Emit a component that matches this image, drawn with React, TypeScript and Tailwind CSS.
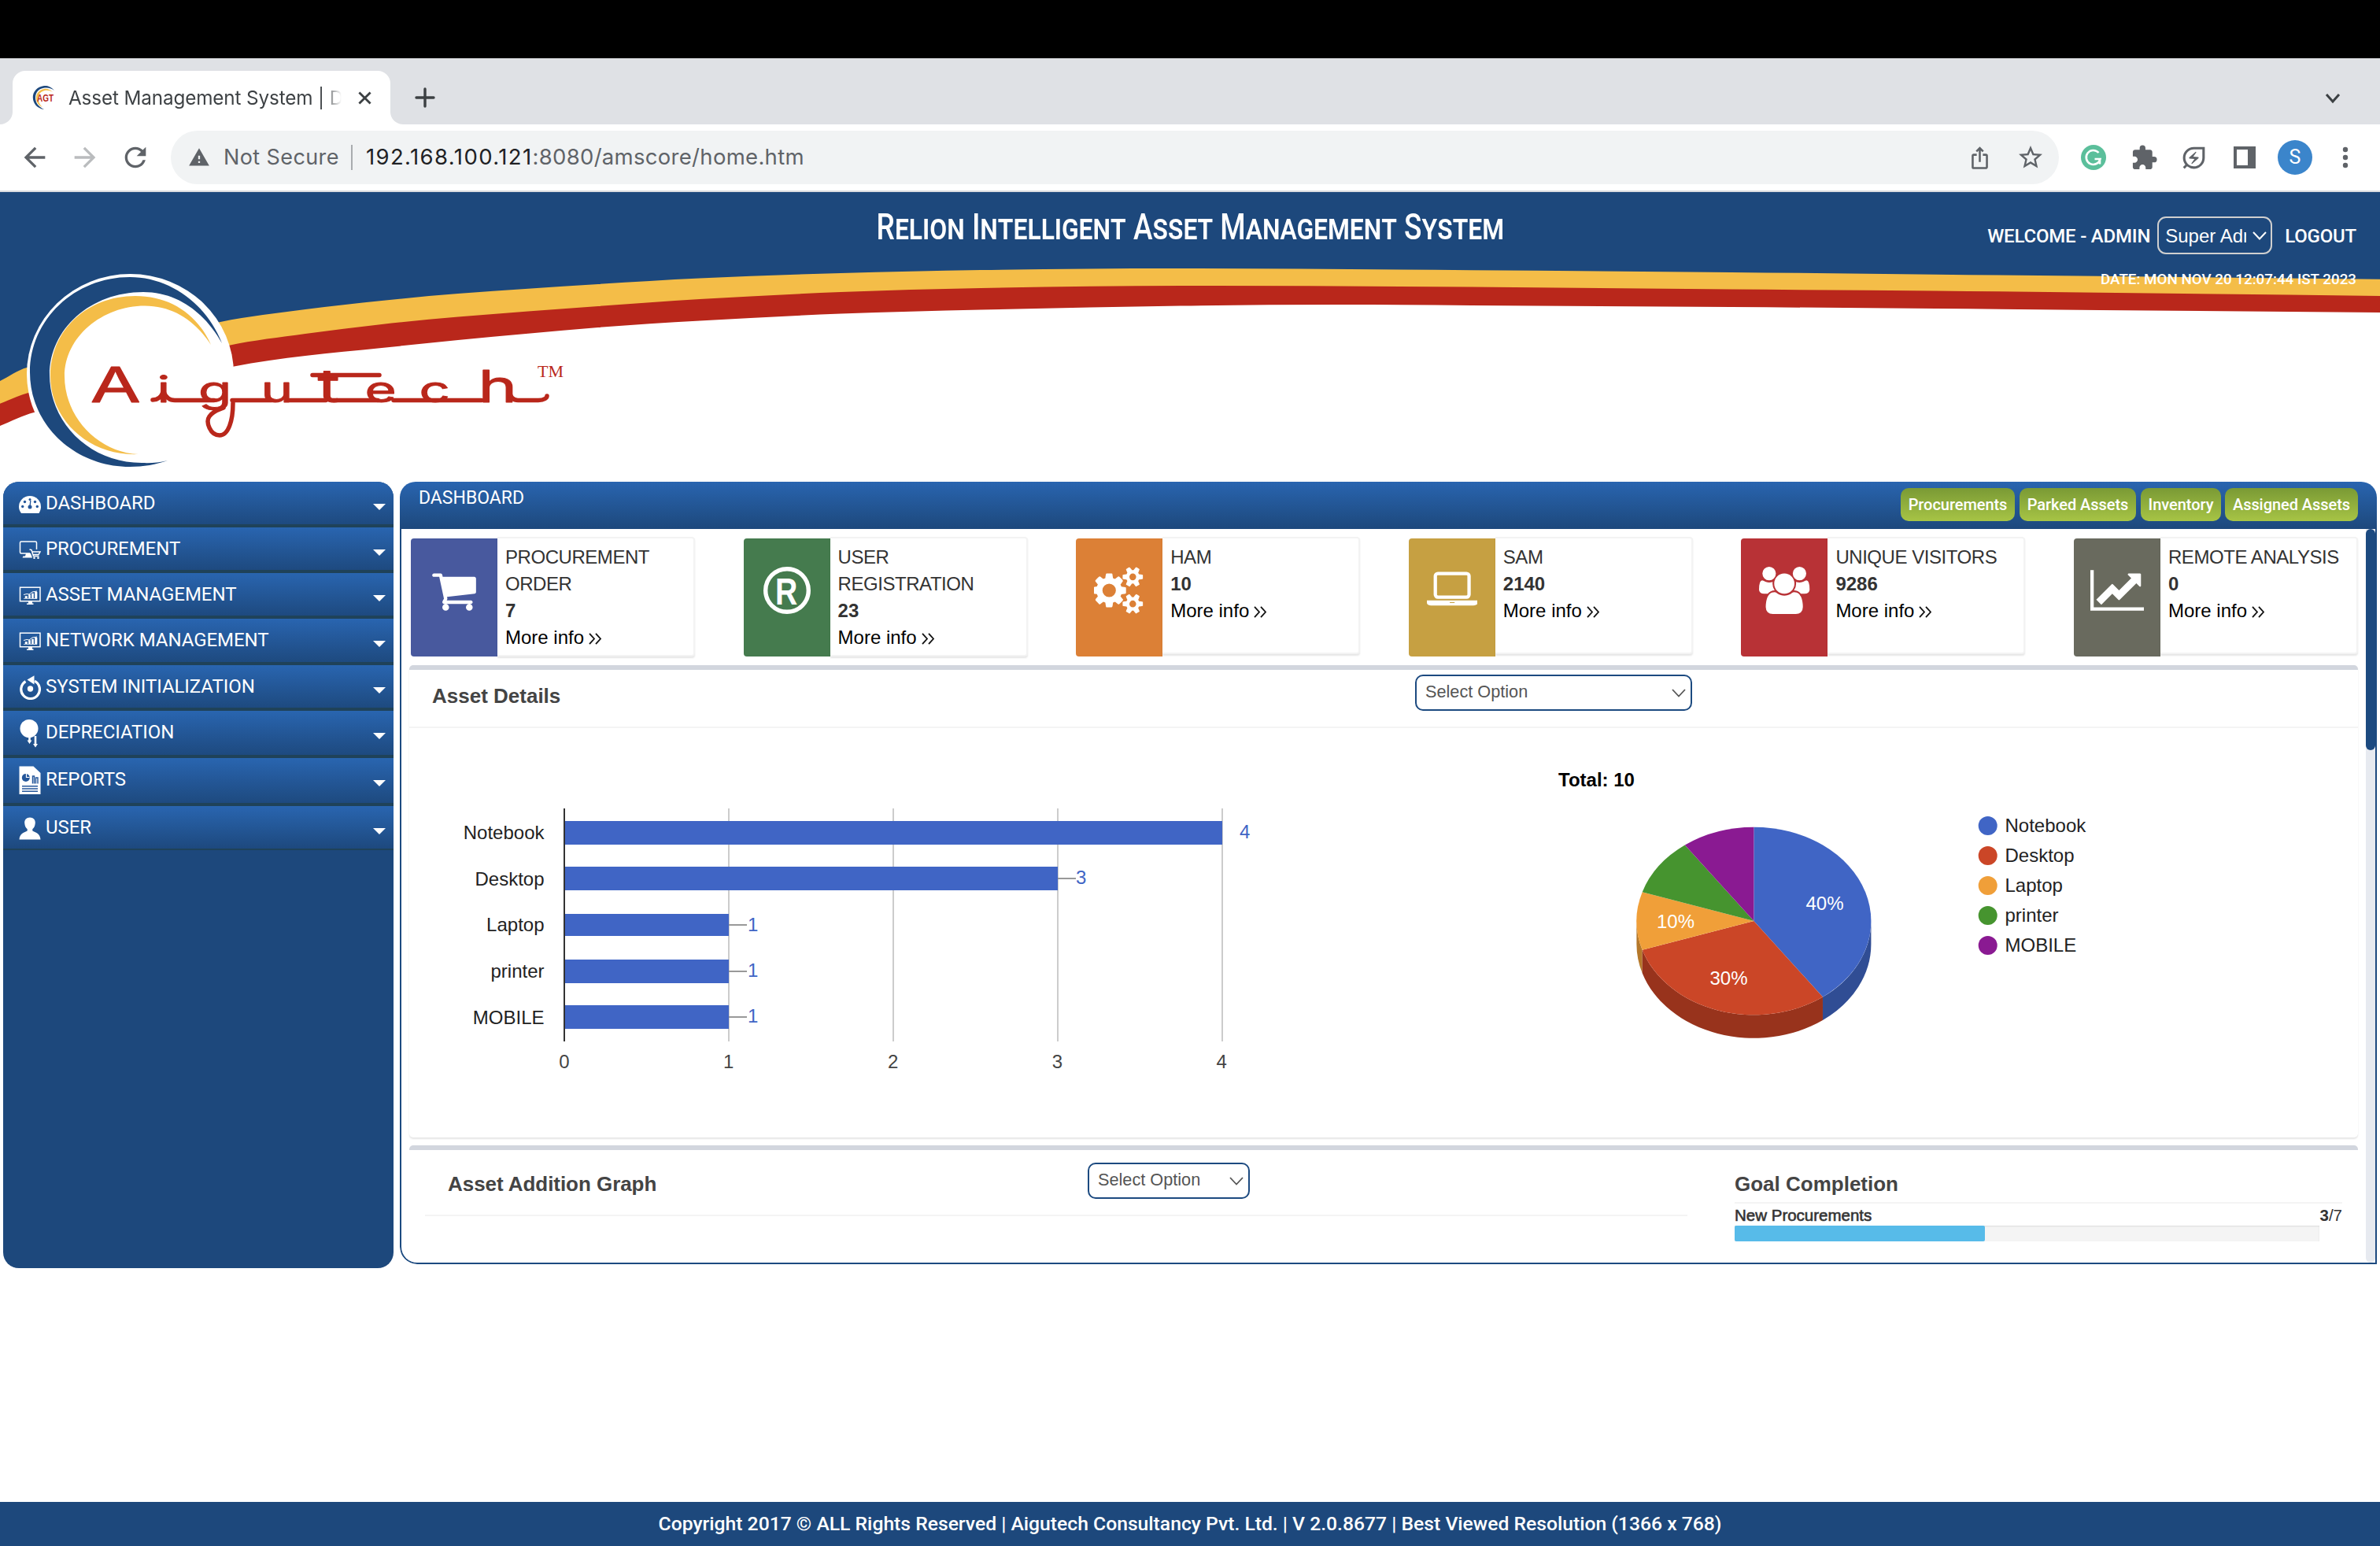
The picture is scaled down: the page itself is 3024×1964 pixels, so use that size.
import React from "react";
import {
  MdArrowBack,
  MdArrowForward,
  MdExtension,
  MdIosShare,
  MdOutlineEnergySavingsLeaf,
  MdRefresh,
  MdStarBorder,
  MdWarning,
} from "react-icons/md";

type Pt = [number, number];

/** Smooth curve (Catmull-Rom) through the given points, as path commands. */
function curve(p: Pt[]): string {
  let d = "";
  for (let i = 0; i < p.length - 1; i++) {
    const a = p[i - 1] ?? p[i];
    const b = p[i];
    const c = p[i + 1];
    const e = p[i + 2] ?? c;
    const t = (c[0] - b[0]) / 3;
    const s1 = i === 0 ? (c[1] - b[1]) / (c[0] - b[0]) : (c[1] - a[1]) / (c[0] - a[0]);
    const s2 = e === c ? (c[1] - b[1]) / (c[0] - b[0]) : (e[1] - b[1]) / (e[0] - b[0]);
    d += ` C${b[0] + t} ${b[1] + s1 * t} ${c[0] - t} ${c[1] - s2 * t} ${c[0]} ${c[1]}`;
  }
  return d;
}

const yellowTop: Pt[] = [
  [0, 484], [34, 467], [280, 409], [388, 393], [485, 382], [582, 373], [760, 361], [889, 353.5],
  [1068, 347], [1246, 343], [1500, 341], [1870, 343.3], [2200, 346], [2460, 348.7], [3024, 354.7],
];
const redTop: Pt[] = [
  [0, 512.7], [36, 499], [290, 439], [388, 424], [485, 412], [582, 402.5], [760, 389], [889, 380],
  [1068, 371], [1246, 366], [1500, 363], [1870, 364.5], [2200, 367.5], [2460, 369.5], [3024, 376],
];
const redBottom: Pt[] = [
  [0, 541], [43, 524], [296, 465.7], [388, 452], [485, 442], [582, 432], [760, 416], [889, 407.5],
  [1068, 398.5], [1246, 393.5], [1500, 388.5], [1700, 387], [1870, 388], [2200, 390], [2460, 392], [3024, 397],
];

function band(p: Pt[]) {
  return `M0 244 L${p[0][0]} ${p[0][1]}${curve(p)} L3024 244 Z`;
}

function Banner() {
  return (
    <svg className="absolute inset-0 h-[368px] w-[3024px]" viewBox="0 244 3024 368">
      <path d={band(redBottom)} fill="#b9271b" />
      <path d={band(redTop)} fill="#f4bd48" />
      <path d={band(yellowTop)} fill="#1d487c" />
      <ellipse cx="165.500" cy="475" rx="131.500" ry="127" fill="#fff" />
      <path
        d="M282 436 C262 385 215 352 165 352 C95 352 38 406 38 473 C38 540 95 593 165 593 C182 593 199 590 213 585 C202 588 190 588.500 180 588 C115 588 63 538 63 476 C63 418 115 371 182 371 C228 371 262 400 282 436Z"
        fill="#1d487c"
      />
      <path
        d="M268 438 C250 398 215 376 172 376 C110 376 64 420 64 478 C64 535 115 580 176 577 C125 575 82 530 82 478 C82 428 130 388.500 184 388.500 C222 388.500 250 410 268 438Z"
        fill="#f4bd48"
      />
      <g fill="#b9271b">
        <text
          transform="scale(1.5 1)"
          x="76.500 133 168 221 269 309 355 405"
          y="511"
          fontFamily="Inter, sans-serif"
          fontSize="46"
          stroke="#b9271b"
          strokeWidth=".9"
          strokeLinejoin="round"
        >
          <tspan fontSize="62">A</tspan>igu<tspan fontSize="58">t</tspan>ec<tspan fontSize="56">h</tspan>
        </text>
        <text x="683" y="479" fontFamily="Liberation Serif, serif" fontSize="22">
          TM
        </text>
      </g>
      <path
        d="M194 508 C201 508 205 504 207 498 M208 498 C211 505 216 508.500 222 508.500 H272 M295 508.500 H345 M368 508.500 H414 M424 508.500 H480 M500 508.500 H612 M647 494 C648 505 652 508.500 658 508.500 H684 C692 508.500 695 505 695 503 M397 476.500 H482 M296 512 C296 535 290 553 279 553 C267 553 261 536 266 529 C271 522 279 520 284 518"
        fill="none"
        stroke="#b9271b"
        strokeWidth="5.500"
        strokeLinecap="round"
      />
    </svg>
  );
}

function TabStrip() {
  return (
    <div className="flex h-[84px] items-end bg-[#dfe1e5] font-[Inter,sans-serif]">
      <div className="flex h-[68px] w-4 bg-white">
        <div className="w-4 rounded-br-2xl bg-[#dfe1e5]" />
      </div>
      <div className="flex h-[68px] w-[480px] items-center rounded-t-2xl bg-white pl-[25px]">
        <svg className="h-8 w-8" viewBox="0 0 32 32">
          <path d="M28 7 C24 2 19 .5 15 1 C6 2 .5 9 .8 16 C1 24 7 30 15 31 C7 27 4 22 4 16 C4 9 9 4 16 3.500 C21 3 25 4.500 28 7Z" fill="#1d487c" />
          <path d="M26 9 C22 5 18 4.500 15 5 C9 6 5 11 5 16 C5 22 8 26 13 28 C9 25 7.500 20 7.500 16 C8 11 11 8 16 7 C20 6.500 23 7.500 26 9Z" fill="#f4bd48" />
          <text x="6" y="21" fontFamily="Liberation Sans, sans-serif" fontWeight="bold" fontSize="12" textLength="21" lengthAdjust="spacingAndGlyphs" fill="#b9271b">
            AGT
          </text>
        </svg>
        <div className="ml-[14px] w-[347px] bg-linear-to-r from-[#3c4043] from-93% to-transparent bg-clip-text text-[24.300px] leading-8 tracking-[-0.150px] whitespace-nowrap text-transparent">
          Asset Management System | D
        </div>
        <svg className="ml-[21px] h-[17px] w-[17px]" viewBox="0 0 18 18" stroke="#3c4043" strokeWidth="3">
          <path d="M1.500 1.500 L16.500 16.500 M16.500 1.500 L1.500 16.500" />
        </svg>
      </div>
      <div className="flex h-[68px] w-4 bg-white">
        <div className="w-4 rounded-bl-2xl bg-[#dfe1e5]" />
      </div>
      <svg className="mb-[21px] ml-[15px] h-[26px] w-[26px]" viewBox="0 0 26 26" stroke="#3c4043" strokeWidth="3.400" strokeLinecap="round">
        <path d="M13 2 V24 M2 13 H24" />
      </svg>
      <svg className="mr-[50px] mb-[26px] ml-auto h-[14px] w-[20px]" viewBox="0 0 20 14" stroke="#3c4043" strokeWidth="3" fill="none">
        <path d="M2 2 L10 11 L18 2" />
      </svg>
    </div>
  );
}

function Toolbar() {
  return (
    <div className="flex h-[86px] items-center border-b-2 border-[#dadce0] bg-white pl-6 font-[Inter,sans-serif] text-[#5f6368]">
      <MdArrowBack className="size-10" />
      <MdArrowForward className="ml-6 size-10 text-[#babcbe]" />
      <MdRefresh className="ml-6 size-10" />
      <div className="ml-[25px] flex h-[68px] w-[2399px] items-center rounded-full bg-[#f1f3f4] pl-[22px]">
        <MdWarning className="size-[28px]" />
        <span className="ml-[17px] text-[27px] tracking-[0.400px]">Not Secure</span>
        <span className="ml-[15px] h-8 w-[2px] bg-[#a9acaf]" />
        <span className="ml-[17px] text-[27.500px] tracking-[0.300px]">
          <span className="tracking-[1.400px] text-[#202124]">192.168.100.121</span>:8080/amscore/home.htm
        </span>
        <MdIosShare className="ml-auto size-[31px]" />
        <MdStarBorder className="mr-[18px] ml-[31px] size-9" />
      </div>
      <svg className="ml-7 size-8" viewBox="0 0 32 32">
        <circle cx="16" cy="16" r="16" fill="#5bbf9b" />
        <path d="M22.500 10 A9 9 0 1 0 24.500 18 H17.500 M24 17 V24.500" fill="none" stroke="#fff" strokeWidth="2.600" />
      </svg>
      <MdExtension className="ml-[31px] size-[35px]" />
      <MdOutlineEnergySavingsLeaf className="ml-[27px] size-[37px]" />
      <svg className="ml-[32px] size-7" viewBox="0 0 28 28">
        <path d="M0 0 H28 V28 H0Z M4 4 V24 H18 V4Z" fillRule="evenodd" fill="#5f6368" />
      </svg>
      <div className="ml-[28px] flex size-11 items-center justify-center rounded-full bg-[#3b85cb] font-[Roboto,sans-serif] text-[25px] text-white">S</div>
      <svg className="ml-[38px] h-[28px] w-[8px]" viewBox="0 0 8 28" fill="#5f6368">
        <circle cx="4" cy="4" r="3.200" />
        <circle cx="4" cy="14" r="3.200" />
        <circle cx="4" cy="24" r="3.200" />
      </svg>
    </div>
  );
}

function Header() {
  return (
    <div className="relative h-[368px] font-[Roboto,sans-serif] text-white">
      <Banner />
      <div className="relative grid grid-cols-[1fr_auto_1fr]">
        <div />
        <h1 className="origin-center scale-x-[0.805] pt-[14px] text-[46px] leading-[60px] font-medium whitespace-nowrap [font-variant:small-caps]">
          Relion Intelligent Asset Management System
        </h1>
        <div className="flex flex-col items-end pr-[30px] font-medium">
          <div className="flex items-center pt-[30px] text-[24px] leading-[48px] whitespace-nowrap">
            <span className="pt-[2px] tracking-[-0.200px]">WELCOME - ADMIN</span>
            <div className="ml-[9px] flex h-[48px] w-[146px] items-center rounded-[11px] border-2 border-[#cfcfcf] pl-2 font-normal">
              <span className="w-[103px] overflow-hidden pt-[2px] font-[Liberation_Sans,sans-serif] text-[24px] leading-[42px]">Super Admin</span>
              <svg className="ml-[8px] h-[11px] w-[18px]" viewBox="0 0 18 11" fill="none" stroke="#fff" strokeWidth="2">
                <path d="M1 1 L9 9.500 L17 1" />
              </svg>
            </div>
            <span className="ml-4 pt-[2px] tracking-[-0.200px]">LOGOUT</span>
          </div>
          <div className="pt-[18px] text-[18.800px] leading-[26px] whitespace-nowrap">DATE: MON NOV 20 12:07:44 IST 2023</div>
        </div>
      </div>
    </div>
  );
}

const monitorChart = (
  <svg viewBox="0 0 28 23" className="h-[23px] w-7">
    <rect x="1.500" y="1.200" width="25.500" height="17.500" fill="none" stroke="#fff" strokeWidth="1.500" />
    <path d="M6 15.500 H23 V7 H20.500 V15 M18.500 15 V9 H16.500 V15 M14.500 15 V10.500 H12.500 V15 M10.500 15 V12.500 H8 V15" fill="#fff" stroke="#fff" strokeWidth=".6" />
    <path d="M6 10.500 L10 9.500 L13 10 L17 7 L23 6" fill="none" stroke="#fff" strokeWidth="1" />
    <path d="M12 19 H17 V21.500 H18.500 V23 H10 V21.500 H12Z" fill="#fff" />
  </svg>
);

type MenuItem = { label: string; height: string; iconTop: string; icon: React.ReactNode };

const menu: MenuItem[] = [
  {
    label: "DASHBOARD",
    height: "h-[58px]",
    iconTop: "pt-[18px]",
    icon: (
      <svg viewBox="0 0 28 22" className="h-[22px] w-7">
        <path d="M3 22 C1 19 0 17 0 14 A14 14 0 0 1 28 14 C28 17 27 19 25.500 22Z" fill="#fff" />
        <g fill="#24569a">
          <circle cx="4.700" cy="13.500" r="1.700" />
          <circle cx="7.500" cy="7.500" r="1.700" />
          <circle cx="14" cy="4.500" r="1.500" />
          <circle cx="20.500" cy="7.500" r="1.700" />
          <circle cx="23.300" cy="13.500" r="1.700" />
          <circle cx="14" cy="14" r="2.500" />
        </g>
        <path d="M14 14 L14.800 6" stroke="#24569a" strokeWidth="1.300" />
      </svg>
    ),
  },
  {
    label: "PROCUREMENT",
    height: "h-[58px]",
    iconTop: "pt-[17px]",
    icon: (
      <svg viewBox="0 0 28 23" className="h-[23px] w-7">
        <path d="M14 16 H3 Q1.500 16 1.500 14.500 V2.500 Q1.500 1 3 1 H21 Q22.500 1 22.500 2.500 V11" fill="none" stroke="#fff" strokeWidth="1.500" />
        <path d="M9 16 H15 L17 21.500 H4.500 L5.500 19.500 H8Z" fill="#fff" />
        <path d="M13.500 11 L16 11.500 L18.500 19.500 H25.500 M17 14 H27 L25 17.500 H18.500" fill="none" stroke="#fff" strokeWidth="1.400" />
        <circle cx="19.500" cy="21.700" r="1.300" fill="#fff" />
        <circle cx="24.500" cy="21.700" r="1.300" fill="#fff" />
      </svg>
    ),
  },
  { label: "ASSET MANAGEMENT", height: "h-[58px]", iconTop: "pt-[17px]", icon: monitorChart },
  { label: "NETWORK MANAGEMENT", height: "h-[59px]", iconTop: "pt-[17px]", icon: monitorChart },
  {
    label: "SYSTEM INITIALIZATION",
    height: "h-[58px]",
    iconTop: "pt-[13px]",
    icon: (
      <svg viewBox="0 0 28 31" className="h-[31px] w-7">
        <path d="M8.500 7.600 A11.800 11.800 0 1 0 20 7.200" fill="none" stroke="#fff" strokeWidth="3.200" />
        <path d="M10.500 5.500 L19.500 .3 V11.500Z" fill="#fff" />
        <circle cx="14.500" cy="17" r="3.700" fill="#fff" />
      </svg>
    ),
  },
  {
    label: "DEPRECIATION",
    height: "h-[60px]",
    iconTop: "pt-[11px]",
    icon: (
      <svg viewBox="0 0 28 36" className="h-9 w-7">
        <circle cx="13" cy="11.500" r="11.500" fill="#fff" />
        <path d="M13.500 21 V27 M21 21 V32" stroke="#fff" strokeWidth="2.600" />
        <path d="M10.500 26.500 H16.500 L13.500 31Z M18 31 H24 L21 35.500Z" fill="#fff" />
      </svg>
    ),
  },
  {
    label: "REPORTS",
    height: "h-[61px]",
    iconTop: "pt-[10px]",
    icon: (
      <svg viewBox="0 0 28 36" className="h-9 w-7">
        <path d="M.5 .5 H18.500 L27.500 9 V36 H.5Z" fill="#fff" />
        <circle cx="8.800" cy="15" r="5" fill="#24569a" />
        <path d="M9.500 15 V10 M9.500 14.500 H13.500" stroke="#fff" strokeWidth="1.200" />
        <path d="M17.500 22.500 V13 H19.500 V22.500 M21.500 22.500 V15 H24 V22.500 M4 25.700 H24 M4 29 H24 M4 32.300 H24" fill="none" stroke="#24569a" strokeWidth="1.400" />
      </svg>
    ),
  },
  {
    label: "USER",
    height: "h-[58px]",
    iconTop: "pt-[14px]",
    icon: (
      <svg viewBox="0 0 28 29" className="h-[29px] w-7">
        <path d="M14 .5 C18.500 .5 21 3.500 20.800 7.500 C20.500 11.500 19 14 17.300 15.300 V17.500 C21 19.500 27 20.500 27.500 28.500 H.5 C1 20.500 7 19.500 10.700 17.500 V15.300 C9 14 7.500 11.500 7.200 7.500 C7 3.500 9.500 .5 14 .5Z" fill="#fff" />
      </svg>
    ),
  },
];

function Sidebar() {
  return (
    <nav className="h-[999px] w-[496px] overflow-hidden rounded-[20px] bg-[#1d487c] font-[Roboto,sans-serif]">
      {menu.map((m, i) => (
        <div
          key={m.label}
          className={`flex items-start border-[#1f4259] bg-linear-to-b from-[#2965b0] to-[#1d487c] bg-origin-border pl-5 text-white ${
            i === menu.length - 1 ? "h-[56px] border-b-2" : `${m.height} border-b-4`
          }`}
        >
          <div className={m.iconTop}>{m.icon}</div>
          <span className="pt-[11px] pl-[6px] text-[24px] leading-8 tracking-[-0.050px] whitespace-nowrap">{m.label}</span>
          <svg className="mt-7 mr-[10px] ml-auto h-2 w-4" viewBox="0 0 16 8" fill="#fff">
            <path d="M0 0 H16 L8 8Z" />
          </svg>
        </div>
      ))}
    </nav>
  );
}

const cartPath =
  "M704 1536q0 52-38 90t-90 38-90-38-38-90 38-90 90-38 90 38 38 90zm896 0q0 52-38 90t-90 38-90-38-38-90 38-90 90-38 90 38 38 90zm128-1088v512q0 24-16.500 42.500t-40.500 21.500l-1044 122q13 60 13 70 0 16-24 64h920q26 0 45 19t19 45-19 45-45 19h-1024q-26 0-45-19t-19-45q0-11 8-31.500t16-36 21.500-40 15.500-29.500l-177-823h-204q-26 0-45-19t-19-45 19-45 45-19h256q16 0 28.500 6.500t19.500 15.500 13 24.500 8 26 5.500 29.500 4.500 26h1201q26 0 45 19t19 45z";
const smallCog =
  "v140q0 16-149 31-12 27-30 52 51 113 51 138 0 4-4 7-122 71-124 71-8 0-46-47t-52-68q-20 2-30 2t-30-2q-14 21-52 68t-46 47q-2 0-124-71-4-3-4-7 0-25 51-138-18-25-30-52-149-15-149-31v-140q0-16 149-31 13-29 30-52-51-113-51-138 0-4 4-7 4-2 35-20t59-34 30-16q8 0 46 46.500t52 67.500q20-2 30-2t30 2q51-71 92-112l6-2q4 0 124 70 4 3 4 7 0 25-51 138 17 23 30 52 149 15 149 31z";
const cogsPath =
  "M832 896q0-106-75-181t-181-75-181 75-75 181 75 181 181 75 181-75 75-181zm768 512q0-52-38-90t-90-38-90 38-38 90q0 53 37.500 90.500t90.500 37.500 90.500-37.500 37.500-90.500zm0-1024q0-52-38-90t-90-38-90 38-38 90q0 53 37.500 90.500t90.500 37.500 90.500-37.500 37.500-90.500zm-384 421v185q0 10-7 19.500t-16 10.500l-155 24q-11 35-32 76 34 48 90 115 7 11 7 20 0 12-7 19-23 30-82.500 89.500t-78.500 59.500q-11 0-21-7l-115-90q-37 19-77 31-11 108-23 155-7 24-30 24h-186q-11 0-20-7.500t-10-17.500l-23-153q-34-10-75-31l-118 89q-7 7-20 7-11 0-21-8-144-133-144-160 0-9 7-19 10-14 41-53t47-61q-23-44-35-82l-152-24q-10-1-17-9.500t-7-19.500v-185q0-10 7-19.500t16-10.500l155-24q11-35 32-76-34-48-90-115-7-11-7-20 0-12 7-20 22-30 82-89t79-59q11 0 21 7l115 90q34-18 77-32 11-108 23-154 7-24 30-24h186q11 0 20 7.500t10 17.500l23 153q34 10 75 31l118-89q8-7 20-7 11 0 21 8 144 133 144 160 0 8-7 19-12 16-42 54t-45 60q23 48 34 82l152 23q10 2 17 10.500t7 19.500zM1856 1338" +
  smallCog +
  "M1856 314" +
  smallCog;
const laptopPath =
  "M416 1216q-66 0-113-47t-47-113v-704q0-66 47-113t113-47h1088q66 0 113 47t47 113v704q0 66-47 113t-113 47h-1088zm-32-864v704q0 13 9.500 22.500t22.500 9.500h1088q13 0 22.500-9.500t9.500-22.500v-704q0-13-9.500-22.500t-22.500-9.500h-1088q-13 0-22.500 9.500t-9.500 22.500zm1376 928h160v96q0 40-47 68t-113 28h-1600q-66 0-113-28t-47-68v-96h1760zm-720 96q16 0 16-16t-16-16h-160q-16 0-16 16t16 16h160z";
const usersPath =
  "M593 896q-162 5-265 128h-134q-82 0-138-40.500t-56-118.500q0-353 124-353 6 0 43.500 21t97.500 42.500 119 21.500q67 0 133-23-5 37-5 66 0 139 81 256zm1071 637q0 120-73 189.500t-194 69.500h-874q-121 0-194-69.500t-73-189.500q0-53 3.500-103.500t14-109 26.500-108.500 43-97.500 62-81 85.500-53.500 111.500-20q10 0 43 21.500t73 48 107 48 135 21.500 135-21.500 107-48 73-48 43-21.500q61 0 111.500 20t85.500 53.500 62 81 43 97.500 26.500 108.500 14 109 3.500 103.500zm-1024-1277q0 106-75 181t-181 75-181-75-75-181 75-181 181-75 181 75 75 181zm704 384q0 159-112.500 271.500t-271.500 112.500-271.500-112.500-112.500-271.500 112.500-271.500 271.500-112.500 271.500 112.500 112.500 271.500zm576 225q0 78-56 118.500t-138 40.500h-134q-103-123-265-128 81-117 81-256 0-29-5-66 66 23 133 23 59 0 119-21.500t97.500-42.500 43.500-21q124 0 124 353zm-128-609q0 106-75 181t-181 75-181-75-75-181 75-181 181-75 181 75 75 181z";
const linePath =
  "M2048 1536v128h-2048v-1536h128v1408h1920zm-128-1248v435q0 21-19.500 29.500t-35.500-7.500l-121-121-633 633q-10 10-23 10t-23-10l-233-233-416 416-192-192 585-585q10-10 23-10t23 10l233 233 464-464-121-121q-16-16-7.500-35.500t29.500-19.500h435q14 0 23 9t9 23z";

function Glyph({ d, w }: { d: string; w: number }) {
  return (
    <svg className="h-[60px]" viewBox={`0 0 ${w} 1792`} fill="#fff">
      <path d={d} />
    </svg>
  );
}

const cards = [
  { title: "PROCUREMENT ORDER", value: "7", bg: "bg-[#48599e]", icon: <Glyph d={cartPath} w={1792} />, tall: true },
  {
    title: "USER REGISTRATION",
    value: "23",
    bg: "bg-[#457b4e]",
    tall: true,
    icon: (
      <svg className="h-[60px]" viewBox="0 0 60 60">
        <circle cx="30" cy="30" r="27.300" fill="none" stroke="#fff" strokeWidth="5.400" />
        <text transform="translate(17.500 47.500) scale(.8 1)" fontFamily="Liberation Sans, sans-serif" fontWeight="bold" fontSize="49" x="-3" fill="#fff">
          R
        </text>
      </svg>
    ),
  },
  { title: "HAM", value: "10", bg: "bg-[#dc8036]", icon: <Glyph d={cogsPath} w={1920} />, tall: false },
  { title: "SAM", value: "2140", bg: "bg-[#c6a042]", icon: <Glyph d={laptopPath} w={1920} />, tall: false },
  { title: "UNIQUE VISITORS", value: "9286", bg: "bg-[#b83236]", icon: <Glyph d={usersPath} w={1920} />, tall: false },
  { title: "REMOTE ANALYSIS", value: "0", bg: "bg-[#696a5e]", icon: <Glyph d={linePath} w={2048} />, tall: false },
];

function Cards() {
  return (
    <div className="flex h-[152px] items-start justify-between pl-[2px]">
      {cards.map((c) => (
        <div key={c.title} className="flex w-[361px] items-start">
          <div className={`mt-[2px] flex h-[150px] w-[110px] shrink-0 items-start justify-center rounded-l-[4px] pt-[36px] ${c.bg}`}>
            {c.icon}
          </div>
          <div
            className={`flex flex-1 flex-col rounded-r-[4px] border-2 border-l-0 border-[#f3f3f3] bg-white pt-[7px] pl-[10px] text-[24px] leading-[34px] text-[#333] shadow-[0_2px_2px_rgba(0,0,0,0.1)] ${
              c.tall ? "h-[152px]" : "h-[149px]"
            }`}
          >
            <span className={`tracking-[-0.450px] ${c.tall ? "w-[200px]" : "whitespace-nowrap"}`}>{c.title}</span>
            <span className="font-bold">{c.value}</span>
            <span className="flex items-center text-black">
              More info
              <svg className="mt-[3px] ml-[6px] h-[15px] w-[17px]" viewBox="0 0 17 15" fill="none" stroke="#111" strokeWidth="1.800">
                <path d="M1 .8 L7 7.500 L1 14.200 M9 .8 L15 7.500 L9 14.200" />
              </svg>
            </span>
          </div>
        </div>
      ))}
    </div>
  );
}

function Select({ wide }: { wide?: boolean }) {
  return (
    <div
      className={`flex h-[46px] items-center justify-between rounded-[10px] border-2 border-[#1c4a80] bg-white pr-[6px] pl-[11px] text-[21.700px] text-[#555] ${
        wide ? "w-[352px]" : "w-[206px]"
      }`}
    >
      <span className="pb-[2px]">Select Option</span>
      <svg className="mt-px h-[11px] w-[18px]" viewBox="0 0 18 11" fill="none" stroke="#555" strokeWidth="1.800">
        <path d="M1 1 L9 9.500 L17 1" />
      </svg>
    </div>
  );
}

const bars = [
  { label: "Notebook", value: 4, y: 1043, h: 30, base: 1066, vb: 1065, vx: 1575 },
  { label: "Desktop", value: 3, y: 1101, h: 30, base: 1125, vb: 1123, vx: 1367 },
  { label: "Laptop", value: 1, y: 1161, h: 28, base: 1183, vb: 1183, vx: 950 },
  { label: "printer", value: 1, y: 1219, h: 30, base: 1242, vb: 1241, vx: 950 },
  { label: "MOBILE", value: 1, y: 1277, h: 30, base: 1301, vb: 1299, vx: 950 },
];

const slices = [
  { label: "Notebook", from: 0, to: 0.4, color: "#4065c5" },
  { label: "Desktop", from: 0.4, to: 0.7, color: "#cb4627" },
  { label: "Laptop", from: 0.7, to: 0.8, color: "#f09f39" },
  { label: "printer", from: 0.8, to: 0.9, color: "#46942f" },
  { label: "MOBILE", from: 0.9, to: 1, color: "#8a1a92" },
];

const CX = 2228.4;
const CY = 1170;
const RX = 149;
const RY = 119.3;
const DEPTH = 29.5;

function rim(f: number): Pt {
  const a = f * 2 * Math.PI;
  return [CX + RX * Math.sin(a), CY - RY * Math.cos(a)];
}

function slice(from: number, to: number) {
  const [x1, y1] = rim(from);
  const [x2, y2] = rim(to);
  return `M${CX} ${CY} L${x1} ${y1} A${RX} ${RY} 0 0 1 ${x2} ${y2}Z`;
}

function side(from: number, to: number) {
  const [x1, y1] = rim(from);
  const [x2, y2] = rim(to);
  return `M${x1} ${y1} A${RX} ${RY} 0 0 1 ${x2} ${y2} V${y2 + DEPTH} A${RX} ${RY} 0 0 0 ${x1} ${y1 + DEPTH}Z`;
}

function Charts() {
  return (
    <svg className="block h-[518px] w-[2476px]" viewBox="520 925 2476 518" fontFamily="Liberation Sans, sans-serif" fontSize="24">
      {[1, 2, 3, 4].map((n) => (
        <rect key={n} x={716 + n * 209} y="1027" width="2" height="296" fill="#ccc" />
      ))}
      {bars.map((b) => {
        const end = 717 + b.value * 209;
        return (
          <g key={b.label}>
            <rect x="718" y={b.y} width={end - 718} height={b.h} fill="#4065c5" />
            {b.value < 4 && <rect x={end} y={b.y + b.h / 2 - 1} width="23" height="2" fill="#999" />}
            <text x="691.500" y={b.base} textAnchor="end" fill="#222">
              {b.label}
            </text>
            <text x={b.vx} y={b.vb} fill="#4065c5">
              {b.value}
            </text>
          </g>
        );
      })}
      <rect x="716" y="1027" width="2" height="296" fill="#333" />
      {[0, 1, 2, 3, 4].map((n) => (
        <text key={n} x={717 + n * 208.8} y="1357" textAnchor="middle" fill="#444">
          {n}
        </text>
      ))}
      <text x="1980" y="999" fontWeight="bold" fill="#000">
        Total: 10
      </text>
      <path d={side(0.25, 0.4)} fill="#304d94" />
      <path d={side(0.7, 0.75)} fill="#b5782a" />
      <path d={side(0.4, 0.7)} fill="#98331c" />
      {slices.map((s) => (
        <path key={s.label} d={slice(s.from, s.to)} fill={s.color} />
      ))}
      <g fill="#fff" textAnchor="middle">
        <text x="2318.500" y="1156">40%</text>
        <text x="2129" y="1179">10%</text>
        <text x="2196.500" y="1251">30%</text>
      </g>
      {slices.map((s, i) => (
        <g key={s.label}>
          <circle cx="2525.700" cy={1049 + i * 38} r="12" fill={s.color} />
          <text x="2547.500" y={1057 + i * 38} fill="#222">
            {s.label}
          </text>
        </g>
      ))}
    </svg>
  );
}

const shortcuts = [
  { label: "Procurements", w: "w-[145px]", gap: "" },
  { label: "Parked Assets", w: "w-[148px]", gap: "ml-[6px]" },
  { label: "Inventory", w: "w-[102px]", gap: "ml-[6px]" },
  { label: "Assigned Assets", w: "w-[169px]", gap: "ml-[5px]" },
];

function Main() {
  return (
    <main className="h-[994px] w-[2512px] overflow-hidden rounded-t-[20px] rounded-bl-[22px] font-[Liberation_Sans,sans-serif]">
      <div className="flex h-[60px] items-start justify-between bg-linear-to-b from-[#2965b0] to-[#1d487c] pr-6 pl-[24px] font-[Roboto,sans-serif] text-white">
        <span className="pt-[5px] text-[23px] leading-8">DASHBOARD</span>
        <div className="flex pt-2">
          {shortcuts.map((s) => (
            <div
              key={s.label}
              className={`flex h-[42px] items-center justify-center rounded-[10px] bg-linear-to-b from-[#7a9a35] to-[#a7c445] text-[20px] font-medium tracking-[-0.050px] whitespace-nowrap ${s.w} ${s.gap}`}
            >
              {s.label}
            </div>
          ))}
        </div>
      </div>
      <div className="flex h-[934px] rounded-bl-[22px] border-x-2 border-b-2 border-[#1c4a80]">
        <div className="w-[2496px] pt-[10px] pr-[10px] pl-[10px]">
          <Cards />
          <section className="mt-[11px] h-[600px] rounded-[5px] border-t-[6px] border-[#d2d6de] shadow-[0_2px_2px_rgba(0,0,0,0.1)]">
            <div className="flex h-[74px] items-start border-b-2 border-[#f4f4f4] pl-[29px]">
              <h2 className="w-[1249px] pt-[15px] text-[26px] leading-9 font-bold text-[#444]">Asset Details</h2>
              <div className="pt-[6px]">
                <Select wide />
              </div>
            </div>
            <Charts />
          </section>
          <section className="mt-[10px] flex h-[143px] items-start overflow-hidden rounded-t-[5px] border-t-[6px] border-[#d2d6de] pl-5">
            <div className="flex h-[84px] w-[1604px] items-start border-b-2 border-[#f4f4f4] pl-[29px]">
              <h2 className="w-[813px] pt-[25px] text-[26px] leading-9 font-bold tracking-[-0.050px] text-[#444]">Asset Addition Graph</h2>
              <div className="pt-4">
                <Select />
              </div>
            </div>
            <div className="ml-[60px] w-[772px]">
              <h2 className="h-[68px] border-b-2 border-[#f4f4f4] pt-[25px] text-[26px] leading-9 font-bold text-[#444]">Goal Completion</h2>
              <div className="flex h-7 justify-between pt-px text-[20.500px] leading-7 text-[#333]">
                <span className="[-webkit-text-stroke:0.600px_#333]">New Procurements</span>
                <span>
                  <b>3</b>/7
                </span>
              </div>
              <div className="h-5 w-[743px] bg-[#f4f4f4] shadow-[inset_0_1px_2px_rgba(0,0,0,0.1)]">
                <div className="h-5 w-[318px] rounded-[2px] bg-[#57bbe9]" />
              </div>
            </div>
          </section>
        </div>
        <div className="w-[12px] rounded-b-full bg-[#e7eaf0]">
          <div className="h-[281px] rounded-full bg-[#1c4a80]" />
        </div>
      </div>
    </main>
  );
}

export default function App() {
  return (
    <div className="flex h-[1964px] w-[3024px] flex-col overflow-hidden bg-white">
      <div className="h-[74px] bg-black" />
      <TabStrip />
      <Toolbar />
      <Header />
      <div className="flex items-start gap-2 pl-1">
        <Sidebar />
        <Main />
      </div>
      <footer className="mt-auto flex h-[56px] items-center justify-center bg-[#1d487c] font-[Roboto,sans-serif] text-[24.700px] font-medium text-white">
        Copyright 2017 © ALL Rights Reserved | Aigutech Consultancy Pvt. Ltd. | V 2.0.8677 | Best Viewed Resolution (1366 x 768)
      </footer>
    </div>
  );
}
